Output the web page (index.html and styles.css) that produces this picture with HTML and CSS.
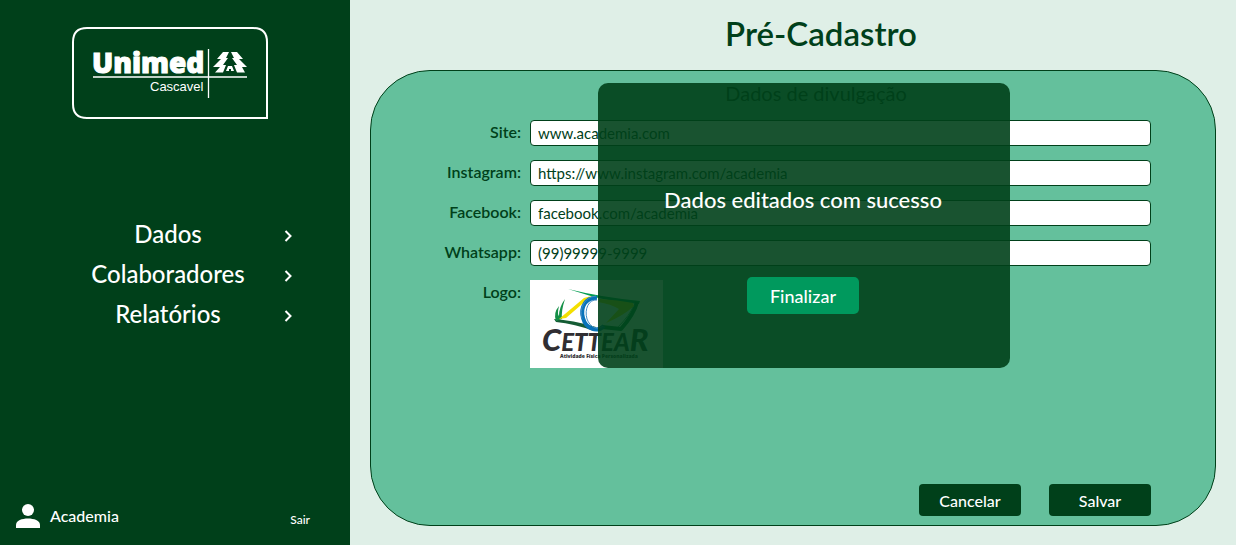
FILE: index.html
```html
<!DOCTYPE html>
<html lang="pt-BR">
<head>
<meta charset="utf-8">
<meta name="viewport" content="width=device-width, initial-scale=1">
<title>Pré-Cadastro</title>
<link rel="stylesheet" href="styles.css">
</head>
<body>
<aside class="sidebar">
  <svg class="brand" viewBox="0 0 196 92" role="img" aria-label="Unimed Cascavel">
    <path d="M15 1H181Q195 1 195 15V91H15Q1 91 1 77V15Q1 1 15 1Z" fill="none" stroke="#fff" stroke-width="2"/>
    <text class="brand-name" x="20" y="46">Unimed</text>
    <text class="brand-city" x="78" y="64">Cascavel</text>
    <path d="M21 50H175M136.500 22V71" stroke="#fff" stroke-width="1.300"/>
    <path d="M151 25H157L154 31H156L151 38H154L151 45.500H143L148 40H141L149 32H145ZM165 25H159L162 31H160L165 38H162L165 45.500H173L170 40H175L167 32H171ZM156 39H160L162 44H159V42H157V44H154Z" fill="#fff"/>
  </svg>
  <nav class="menu">
    <a class="menu-item" href="#dados"><span>Dados</span><svg class="chevron" viewBox="0 0 8 12" aria-hidden="true"><path d="M1.500 1L6.500 6L1.500 11"/></svg></a>
    <a class="menu-item" href="#colaboradores"><span>Colaboradores</span><svg class="chevron" viewBox="0 0 8 12" aria-hidden="true"><path d="M1.500 1L6.500 6L1.500 11"/></svg></a>
    <a class="menu-item" href="#relatorios"><span>Relatórios</span><svg class="chevron" viewBox="0 0 8 12" aria-hidden="true"><path d="M1.500 1L6.500 6L1.500 11"/></svg></a>
  </nav>
  <footer class="account">
    <svg class="avatar" viewBox="0 0 24 24" aria-hidden="true"><circle cx="12" cy="6" r="6"/><path d="M0 24V21C0 16.500 6 14.500 12 14.500S24 16.500 24 21V24Z"/></svg>
    <span class="account-name">Academia</span>
    <a class="logout" href="#sair">Sair</a>
  </footer>
</aside>
<main class="content">
  <h1 class="title">Pré-Cadastro</h1>
  <form class="card">
    <h2 class="subtitle">Dados de divulgação</h2>
    <div class="fields">
      <label for="site">Site:</label><input id="site" type="text" value="www.academia.com">
      <label for="instagram">Instagram:</label><input id="instagram" type="text" value="https://www.instagram.com/academia">
      <label for="facebook">Facebook:</label><input id="facebook" type="text" value="facebook.com/academia">
      <label for="whatsapp">Whatsapp:</label><input id="whatsapp" type="text" value="(99)99999-9999">
      <span class="logo-label">Logo:</span>
      <svg class="partner" viewBox="0 0 133 88" role="img" aria-label="Cettear">
        <path fill="#fff" d="M0 0H133V88H0Z"/>
        <path d="M38 9Q70 17 110 21L109 24Q85 22 64 17Z" fill="#009c50"/>
        <path d="M107 22Q104 34 91 49L72 47" fill="none" stroke="#087d3d" stroke-width="4" stroke-linejoin="round"/>
        <path d="M104 25Q100 35 88 47" fill="none" stroke="#40a869" stroke-width="1"/>
        <path d="M24 39Q42 40 66 47L64 51Q45 44 26 42Z" fill="#155c34"/>
        <path d="M26 41Q23 33 29 26Q27 34 29 36Q29 27 35 19Q31 31 32 39Z" fill="#149047"/>
        <path d="M29 39L54 18Q62 15 68 17Q57 19 51 25L36 38ZM70 19Q88 20 103 23L104 26Q93 36 76 43L89 29Q81 24 68 22Z" fill="#f4df00"/>
        <path d="M67 18C56 17 50 27 53 38C56 49 67 53 74 46" fill="none" stroke="#0872b9" stroke-width="4"/>
        <path d="M67 20C59 19 54 29 57 39C60 47 67 51 73 46M66 16C54 17 49 29 52 39" fill="none" stroke="#408bc5" stroke-width="1"/>
        <text class="partner-name" x="12" y="71"><tspan class="partner-cap">C</tspan>ETTEA<tspan class="partner-cap">R</tspan></text>
        <text class="partner-note" x="30" y="78">Atividade Física Personalizada</text>
      </svg>
    </div>
    <div class="actions">
      <button class="button" type="button">Cancelar</button>
      <button class="button" type="submit">Salvar</button>
    </div>
    <section class="dialog" role="dialog" aria-labelledby="message">
      <p class="message" id="message">Dados editados com sucesso</p>
      <button class="finish" type="button">Finalizar</button>
    </section>
  </form>
</main>
</body>
</html>
```
FILE: styles.css
```css
* { box-sizing: border-box; }
body {
  display: flex;
  min-height: 100vh;
  margin: 0;
  background: #dfefe7;
  color: #00401a;
  font-family: Lato, sans-serif;
  font-size: 16px;
}
button, input { font: inherit; }
.sidebar {
  display: flex;
  flex: 0 0 350px;
  flex-direction: column;
  padding: 27px 0 17px;
  background: #00401a;
  color: #fff;
}
.brand { width: 196px; margin-left: 72px; fill: #fff; }
.brand-name { font: 800 28px "Open Sans", sans-serif; stroke: #fff; stroke-width: 1px; }
.brand-city { font: 13px "Liberation Sans", sans-serif; }
.menu { padding: 97px 58px 0 60px; }
.menu-item {
  display: grid;
  grid-template-columns: 1fr 8px;
  align-items: center;
  column-gap: 8px;
  height: 40px;
  color: inherit;
  font-size: 24px;
  font-weight: 500;
  line-height: 28px;
  text-align: center;
  text-decoration: none;
}
.menu-item span { padding-bottom: 4px; }
.chevron { width: 8px; height: 12px; fill: none; stroke: #fff; stroke-width: 2; }
.account {
  display: flex;
  align-items: center;
  margin-top: auto;
  padding: 0 40px 0 16px;
  font-weight: 500;
}
.account-name { padding-bottom: 2px; }
.avatar { width: 24px; height: 24px; margin-right: 10px; fill: #fff; }
.logout {
  margin-left: auto;
  padding-top: 6px;
  color: inherit;
  font-size: 12px;
  font-weight: 500;
  text-decoration: none;
}
.content {
  display: flex;
  flex: 1;
  flex-direction: column;
  padding: 13px 20px 19px;
}
.title {
  margin: 0 0 17px;
  padding-left: 56px;
  font-size: 33px;
  font-weight: 600;
  line-height: 40px;
  text-align: center;
}
.card {
  position: relative;
  display: flex;
  flex: 1;
  flex-direction: column;
  padding: 10px 64px 9px;
  border: 1px solid #00401a;
  border-radius: 60px;
  background: #64c09c;
}
.subtitle {
  margin: 0 0 15px;
  padding-left: 46px;
  font-size: 20px;
  font-weight: 400;
  line-height: 24px;
  text-align: center;
}
.fields {
  display: grid;
  grid-template-columns: 86px 1fr;
  gap: 14px 9px;
  align-items: center;
}
.fields label, .logo-label {
  padding-bottom: 2px;
  font-weight: 600;
  line-height: 24px;
  text-align: right;
}
.fields input {
  min-width: 0;
  width: 100%;
  height: 26px;
  padding: 0 7px;
  border: 1px solid #00401a;
  border-radius: 4px;
  background: #fff;
  color: #00401a;
  font-size: 15px;
  font-weight: 400;
}
.logo-label { align-self: start; }
.partner { width: 133px; height: 88px; }
.partner-name { fill: #302e32; font: italic 900 24px Lato, sans-serif; }
.partner-cap { font-size: 31px; }
.partner-note { fill: #302e32; font: 900 5px "Open Sans", sans-serif; }
.actions {
  display: flex;
  justify-content: flex-end;
  gap: 28px;
  margin-top: auto;
}
.button {
  width: 102px;
  height: 32px;
  padding: 0;
  border: 0;
  border-radius: 4px;
  background: #00401a;
  color: #fff;
  font-weight: 500;
}
.dialog {
  position: absolute;
  top: 12px;
  left: calc(50% + 11px);
  display: flex;
  flex-direction: column;
  align-items: center;
  gap: 63px;
  width: 412px;
  padding: 102px 2px 54px 0;
  border-radius: 10px;
  background: rgb(0 64 26 / 90%);
  color: #fff;
  transform: translateX(-50%);
}
.message {
  margin: 0;
  font-size: 22px;
  font-weight: 500;
  line-height: 29px;
}
.finish {
  width: 112px;
  height: 37px;
  padding: 0;
  border: 0;
  border-radius: 5px;
  background: #00995d;
  color: #fff;
  font-size: 18px;
  font-weight: 500;
}
```
